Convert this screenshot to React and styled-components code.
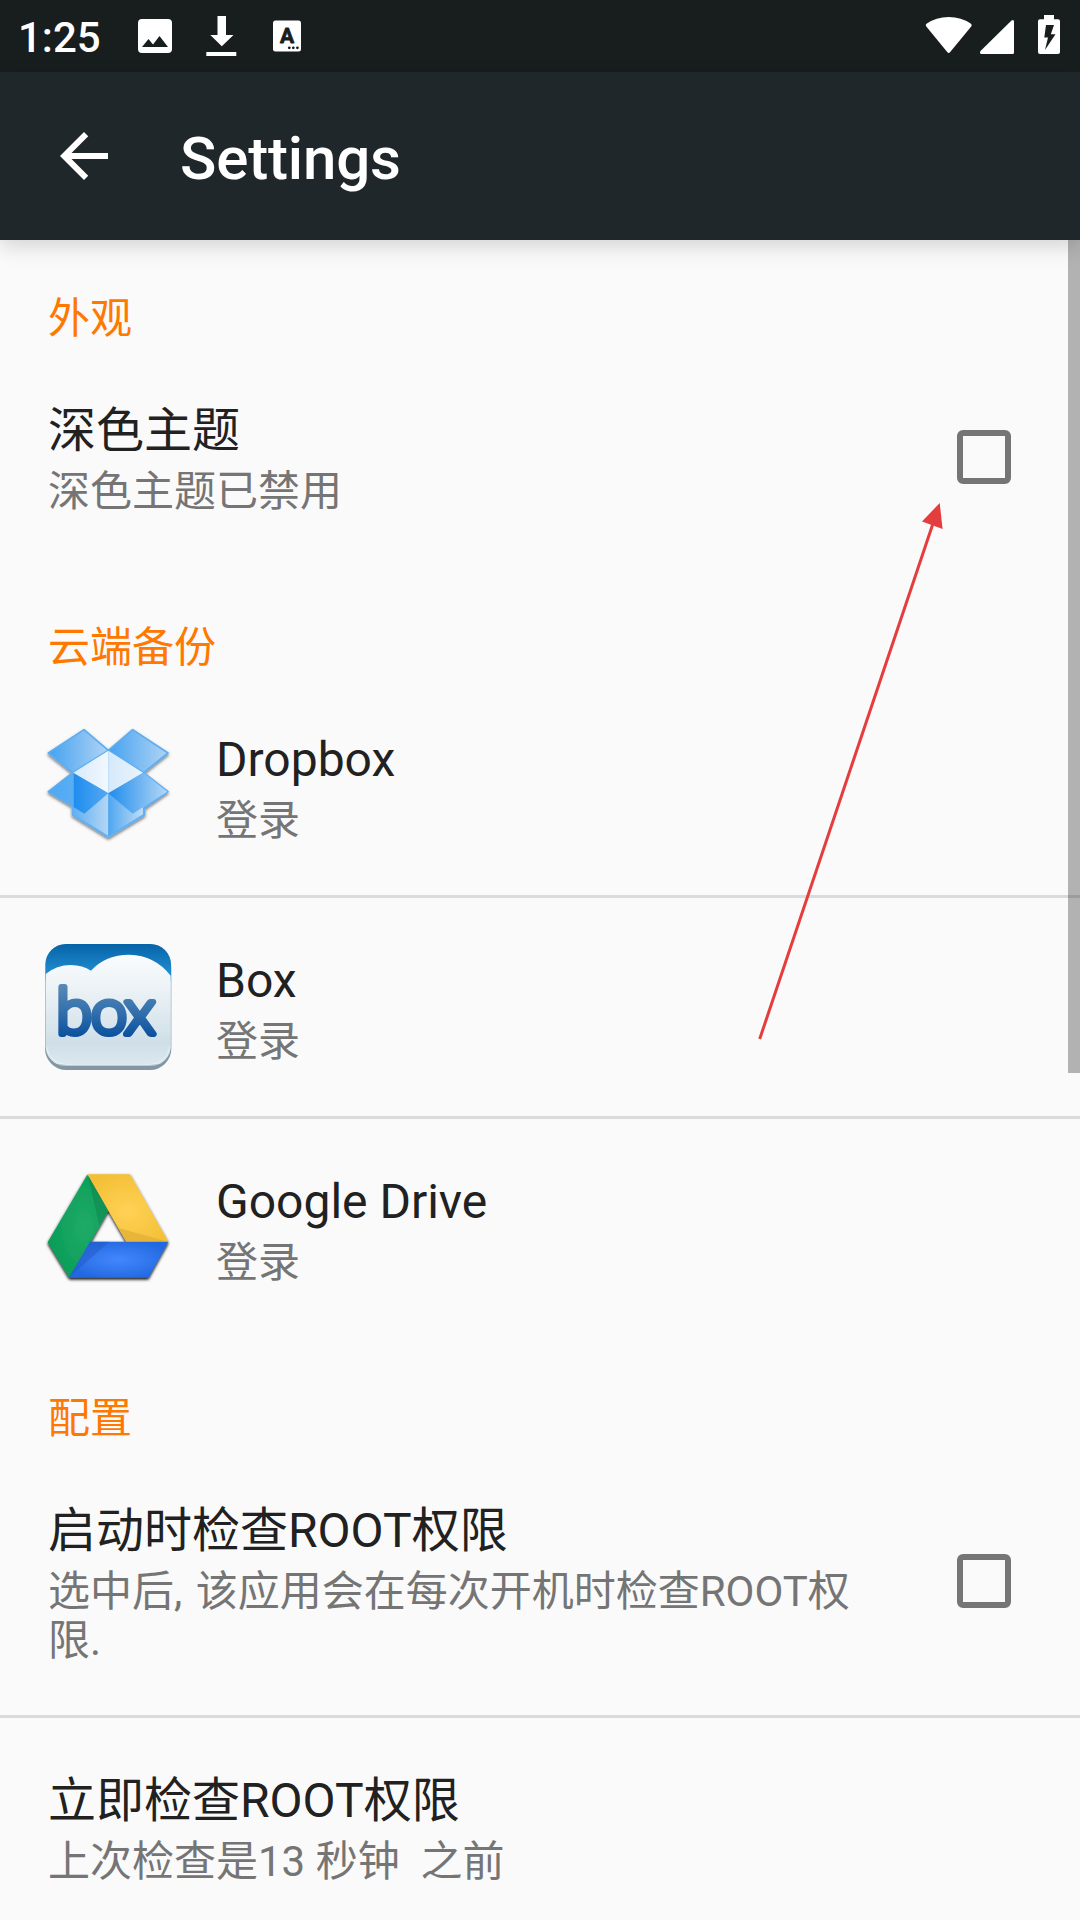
import React from "react";
import styled, { createGlobalStyle } from "styled-components";

const GlobalStyle = createGlobalStyle`
  html, body { margin: 0; padding: 0; background: #fafafa; }
  * { box-sizing: border-box; }
`;

const Screen = styled.div`
  position: relative;
  width: 1080px;
  height: 1920px;
  overflow: hidden;
  display: flex;
  flex-direction: column;
  background: #fafafa;
  color: #212121;
  font-family: Roboto, "Noto Sans CJK SC", sans-serif;
`;

const StatusBar = styled.header`
  flex: none;
  height: 72px;
  padding: 0 20px 0 18px;
  display: flex;
  justify-content: space-between;
  background: #181d1d;
  color: #fff;
`;

const StatusGroup = styled.div`
  display: flex;
  align-items: flex-start;
`;

const Clock = styled.span`
  width: 114px;
  font-size: 42px;
  font-weight: 500;
  line-height: 49px;
  padding-top: 13px;
`;

const StatusIcon = styled.svg`
  display: block;
  width: ${(p) => p.$w}px;
  height: 72px;
`;

const AppBar = styled.div`
  flex: none;
  z-index: 1;
  height: 168px;
  padding: 0 48px;
  display: flex;
  align-items: center;
  gap: 60px;
  background: #20272a;
  color: #fff;
  box-shadow: 0 6px 20px rgba(0, 0, 0, 0.16);
`;

const BackButton = styled.button`
  width: 72px;
  height: 72px;
  padding: 0;
  border: 0;
  background: none;
  color: inherit;
  svg { display: block; }
`;

const ScreenTitle = styled.h1`
  margin: 6px 0 0;
  font-size: 60px;
  font-weight: 500;
  line-height: 72px;
  letter-spacing: -0.15px;
`;

const Content = styled.main`
  flex: none;
  display: flex;
  flex-direction: column;
`;

const SectionTitle = styled.h2`
  margin: 0;
  height: 108px;
  padding: 54px 48px 0;
  font-size: 42px;
  font-weight: 400;
  line-height: 49px;
  color: #ff7800;
`;

const Row = styled.div`
  display: flex;
  align-items: center;
  min-height: 221px;
  padding-left: ${(p) => (p.$icon ? 36 : 48)}px;
  padding-right: 69px;
  border-bottom: 3px solid ${(p) => (p.$divider ? "#dbdbdb" : "transparent")};
`;

const Logo = styled.svg`
  flex: none;
  width: 144px;
  height: 144px;
  margin-right: 36px;
`;

const RowText = styled.div`
  width: 840px;
  padding: 54px 0 50px;
`;

const Title = styled.div`
  font-size: 48px;
  line-height: 57px;
`;

const Summary = styled.div`
  margin-top: 8px;
  font-size: 42px;
  line-height: 49px;
  color: #757575;
  white-space: pre-wrap;
  word-spacing: ${(p) => p.$wordGap || 0}px;
`;

const Checkbox = styled.span`
  flex: none;
  width: 54px;
  height: 54px;
  margin-left: auto;
  margin-bottom: 0.5px;
  border: 6px solid #757575;
  border-radius: 6px;
`;

const ScrollThumb = styled.div`
  position: absolute;
  top: 240px;
  right: 0;
  width: 12px;
  height: 833px;
  background: rgba(0, 0, 0, 0.285);
`;

const Pointer = styled.svg`
  position: absolute;
  left: 750px;
  top: 495px;
  width: 200px;
  height: 550px;
  pointer-events: none;
`;

const DropboxLogo = () => (
  <Logo viewBox="18 12 432 432">
    <defs>
      <linearGradient id="dLid"><stop offset="0" stopColor="#45a2f1" /><stop offset="1" stopColor="#b0d4f4" /></linearGradient>
      <linearGradient id="dInL"><stop offset="0" stopColor="#d8eafb" /><stop offset="1" stopColor="#f2f8fe" /></linearGradient>
      <linearGradient id="dInR"><stop offset="0" stopColor="#d6e9fa" /><stop offset="1" stopColor="#eaf4fd" /></linearGradient>
      <linearGradient id="dFlapR"><stop offset="0" stopColor="#1f8cec" /><stop offset="1" stopColor="#b4d7f6" /></linearGradient>
      <linearGradient id="dFlapL"><stop offset="0" stopColor="#4ea8f3" /><stop offset="0.41" stopColor="#5aaef3" /><stop offset="0.42" stopColor="#1f8dee" /><stop offset="1" stopColor="#55a9f0" /></linearGradient>
      <linearGradient id="dBodyL"><stop offset="0" stopColor="#62b0f2" /><stop offset="1" stopColor="#b3d7f5" /></linearGradient>
      <linearGradient id="dBodyR"><stop offset="0" stopColor="#4fa6f1" /><stop offset="1" stopColor="#c0ddf6" /></linearGradient>
      <filter id="dShadow" x="-10%" y="-10%" width="120%" height="125%"><feDropShadow dx="0" dy="5" stdDeviation="4" floodColor="#000" floodOpacity="0.55" /></filter>
    </defs>
    <g filter="url(#dShadow)" strokeLinejoin="round">
      <path d="M128 188V315L235 381L343 315V188L235 121Z" fill="#62b0f2" stroke="#62b0f2" strokeWidth="6" />
      <path d="M55 129L162 59L235 121L128 188Z" fill="url(#dLid)" stroke="#5badf1" strokeWidth="5" />
      <path d="M235 121L308 59L414 129L341 188Z" fill="url(#dLid)" stroke="#5badf1" strokeWidth="5" />
      <path d="M55 245L128 188L235 248L164 310Z" fill="#4ea8f3" stroke="#5badf1" strokeWidth="5" />
      <path d="M341 188L414 245L343 294L308 310L235 248Z" fill="#77bbf3" stroke="#5badf1" strokeWidth="5" />
    </g>
    <path d="M131 248V313L235 377V248Z" fill="url(#dBodyL)" />
    <path d="M235 248V377L339 313V248Z" fill="url(#dBodyR)" />
    <path d="M130 188L235 122V250Z" fill="url(#dInL)" />
    <path d="M235 122L339 188L235 250Z" fill="url(#dInR)" />
    <path d="M57 245L128 188L235 250L163 311Z" fill="url(#dFlapL)" />
    <path d="M341 188L412 245L308 311L235 250Z" fill="url(#dFlapR)" />
  </Logo>
);

const BoxLogo = () => (
  <Logo viewBox="18 15 432 432">
    <defs>
      <linearGradient id="bSky" x1="0" y1="0" x2="0" y2="1"><stop offset="0" stopColor="#0663a8" /><stop offset="1" stopColor="#2796d9" /></linearGradient>
      <linearGradient id="bCloud" x1="0" y1="0" x2="0" y2="1"><stop offset="0" stopColor="#fafcfd" /><stop offset="0.35" stopColor="#eaf1f5" /><stop offset="0.8" stopColor="#cfdfe8" /><stop offset="1" stopColor="#dbe7ee" /></linearGradient>
      <linearGradient id="bWord" gradientUnits="userSpaceOnUse" x1="0" y1="158" x2="0" y2="322"><stop offset="0" stopColor="#5a8bb8" /><stop offset="0.5" stopColor="#3572ad" /><stop offset="1" stopColor="#0b4f9e" /></linearGradient>
      <clipPath id="bClip"><rect x="46" y="42" width="377" height="366" rx="62" /></clipPath>
    </defs>
    <rect x="45" y="50" width="379" height="370" rx="64" fill="#8396a4" />
    <rect x="46" y="42" width="377" height="366" rx="62" fill="#b5c6d1" />
    <g clipPath="url(#bClip)">
      <rect x="46" y="42" width="377" height="110" fill="url(#bSky)" />
      <path d="M47 132Q80 105 122 105Q158 106 183 122Q226 74 298 74Q375 76 422 137V403H47Z" fill="url(#bCloud)" />
      <path d="M49 350Q60 403 115 404H354Q409 403 420 350" fill="none" stroke="#e8f0f4" strokeWidth="3" />
    </g>
    <text x="78" y="312" fontFamily="Lato, sans-serif" fontWeight="300" fontSize="196" letterSpacing="-4" fill="url(#bWord)" stroke="url(#bWord)" strokeWidth="18" strokeLinejoin="round">box</text>
  </Logo>
);

const DriveLogo = () => (
  <Logo viewBox="18 18 432 432">
    <defs>
      <radialGradient id="gGreen" cx="0.6" cy="0.5" r="0.65"><stop offset="0" stopColor="#1fab68" /><stop offset="1" stopColor="#079b56" /></radialGradient>
      <radialGradient id="gYellow" cx="0.5" cy="0.55" r="0.6"><stop offset="0" stopColor="#ffd256" /><stop offset="1" stopColor="#f3bf36" /></radialGradient>
      <radialGradient id="gBlue" cx="0.5" cy="0.5" r="0.55"><stop offset="0" stopColor="#4387fd" /><stop offset="1" stopColor="#2369e1" /></radialGradient>
      <linearGradient id="gShadeG" gradientUnits="userSpaceOnUse" x1="175" y1="120" x2="220" y2="220"><stop offset="0" stopColor="#0f8a50" stopOpacity="0.7" /><stop offset="1" stopColor="#138a53" stopOpacity="0.6" /></linearGradient>
      <filter id="gShadow" x="-10%" y="-10%" width="120%" height="125%">
        <feDropShadow dx="0" dy="5" stdDeviation="4.500" floodColor="#000" floodOpacity="1" />
      </filter>
    </defs>
    <g filter="url(#gShadow)">
      <path d="M172 74L235 182L182 275L118 383L53 277Z" fill="url(#gGreen)" />
      <path d="M172 73H300L415 275H289Z" fill="url(#gYellow)" />
      <path d="M180 275H415L355 383H117Z" fill="url(#gBlue)" />
    </g>
    <path d="M173 74L234 182L208 227Z" fill="url(#gShadeG)" />
    <path d="M267 235L414 275H289Z" fill="#dfae38" fillOpacity="0.7" />
    <path d="M180 275H237L118 382Z" fill="#2159c4" fillOpacity="0.5" />
  </Logo>
);

const StatusLeft = () => (
  <StatusGroup>
    <Clock>1:25</Clock>
    <StatusIcon $w={180} viewBox="132 0 180 72" fill="#fff">
      <path fillRule="evenodd" d="M142 19H168Q172 19 172 23V49Q172 53 168 53H142Q138 53 138 49V23Q138 19 142 19ZM142 47H168L159.500 36L153 44.500L148.500 39Z" />
      <path d="M217.500 16H226V35H233.500L221.800 46.200L210.300 35H217.500ZM206.300 52H236.300V56H206.300Z" />
      <rect x="273" y="20.500" width="28" height="31" rx="2.500" />
      <g fill="#181d1d">
        <text x="287" y="43" textAnchor="middle" fontFamily="Roboto, sans-serif" fontSize="21" fontWeight="700" stroke="#181d1d" strokeWidth="0.800" strokeLinejoin="round">A</text>
        <circle cx="289.300" cy="47.800" r="1.400" /><circle cx="293.300" cy="47.800" r="1.400" /><circle cx="297.400" cy="47.800" r="1.400" />
      </g>
    </StatusIcon>
  </StatusGroup>
);

const StatusRight = () => (
  <StatusGroup>
    <StatusIcon $w={140} viewBox="920 0 140 72" fill="#fff">
      <path d="M926.300 26.500Q925 25 926.500 23.800Q936 17 948.700 17Q961.500 17 971 23.800Q972.400 25 971.200 26.500L950.200 52Q948.700 53.800 947.200 52Z" />
      <path d="M980.500 51L1011.500 20.500Q1014 19 1014 21.500V52.500Q1014 54 1012.500 54H981.500Q979 53.500 980.500 51Z" />
      <path fillRule="evenodd" d="M1044 15H1054V19.300H1058Q1060 19.300 1060 21.300V52Q1060 54 1058 54H1040Q1038 54 1038 52V21.300Q1038 19.300 1040 19.300H1044ZM1046 25L1044.300 37.500H1048L1045 50L1055.500 34.300H1050.800L1054 25Z" />
    </StatusIcon>
  </StatusGroup>
);

const SettingRow = ({ title, summary, logo, checkbox, divider, wordGap }) => (
  <Row $icon={Boolean(logo)} $divider={divider}>
    {logo}
    <RowText>
      <Title>{title}</Title>
      <Summary $wordGap={wordGap}>{summary}</Summary>
    </RowText>
    {checkbox && <Checkbox role="checkbox" aria-checked="false" />}
  </Row>
);

export default function App() {
  return (
    <Screen>
      <GlobalStyle />
      <StatusBar>
        <StatusLeft />
        <StatusRight />
      </StatusBar>
      <AppBar>
        <BackButton>
          <svg width="72" height="72" viewBox="0 0 24 24" fill="currentColor">
            <path d="M20 11H7.830l5.590-5.590L12 4l-8 8 8 8 1.410-1.410L7.830 13H20v-2z" />
          </svg>
        </BackButton>
        <ScreenTitle>Settings</ScreenTitle>
      </AppBar>
      <Content>
        <SectionTitle>外观</SectionTitle>
        <SettingRow title="深色主题" summary="深色主题已禁用" checkbox />
        <SectionTitle>云端备份</SectionTitle>
        <SettingRow title="Dropbox" summary="登录" logo={<DropboxLogo />} divider />
        <SettingRow title="Box" summary="登录" logo={<BoxLogo />} divider />
        <SettingRow title="Google Drive" summary="登录" logo={<DriveLogo />} />
        <SectionTitle>配置</SectionTitle>
        <SettingRow title="启动时检查ROOT权限" summary="选中后, 该应用会在每次开机时检查ROOT权限." wordGap={3} checkbox divider />
        <SettingRow title="立即检查ROOT权限" summary={"上次检查是13 秒钟  之前"} />
      </Content>
      <ScrollThumb />
      <Pointer viewBox="750 495 200 550">
        <path d="M759.700 1039L932.500 525" stroke="#e53c3d" strokeWidth="3" fill="none" />
        <path d="M939.700 503L942.600 529L922 521.500Z" fill="#e53c3d" />
      </Pointer>
    </Screen>
  );
}
